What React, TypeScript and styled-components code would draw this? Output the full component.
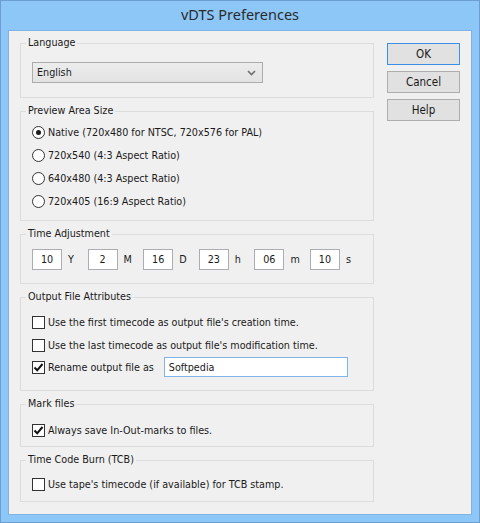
import React from "react";
import styled, { createGlobalStyle } from "styled-components";

const GlobalStyle = createGlobalStyle`
  html, body {
    margin: 0;
    padding: 0;
    background: #8cc7f7;
  }
  body {
    font-family: "DejaVu Sans Condensed", "DejaVu Sans", sans-serif;
    font-stretch: condensed;
    font-size: 10.7px;
    color: #1a1a1a;
  }
`;

const Window = styled.div`
  width: 480px;
  height: 523px;
  box-sizing: border-box;
  border: 1px solid #6d9ed1;
  background: #8cc7f7;
  display: flex;
  flex-direction: column;
`;

const TitleBar = styled.div`
  height: 29px;
  display: flex;
  align-items: center;
  justify-content: center;
  font-family: "Noto Sans", "Open Sans", sans-serif;
  font-stretch: normal;
  font-size: 14.5px;
  color: #2b2b2b;
  padding-bottom: 3px;
  box-sizing: border-box;
`;

const Client = styled.div`
  margin: 0 7px 7px;
  flex: 1;
  background: #f0f0f0;
  border: 1px solid #7fb3e4;
  display: flex;
  padding: 5px 0 0 11px;
  gap: 13px;
`;

const Column = styled.div`
  width: 354px;
  display: flex;
  flex-direction: column;
  gap: 6px;
`;

const Group = styled.fieldset<{ $h: number }>`
  margin: 0;
  padding: 0;
  box-sizing: border-box;
  height: ${(p) => p.$h}px;
  border: 1px solid #dcdcdc;
  min-width: 0;
`;

const Legend = styled.legend`
  margin-left: 5px;
  padding: 0 2px;
  line-height: 14px;
`;

const GroupBody = styled.div<{ $pt: number }>`
  padding: ${(p) => p.$pt}px 10px 0 11px;
  display: flex;
  flex-direction: column;
`;

const Select = styled.div`
  width: 231px;
  height: 21px;
  box-sizing: border-box;
  border: 1px solid #acacac;
  background: linear-gradient(#ececec, #e3e3e3);
  display: flex;
  align-items: center;
  justify-content: space-between;
  padding: 0 6px 0 4px;
`;

const Row = styled.label<{ $h?: number }>`
  height: ${(p) => p.$h ?? 23}px;
  display: flex;
  align-items: center;
  gap: 3px;
  white-space: nowrap;
`;

const RadioDot = styled.span<{ $on?: boolean }>`
  width: 13px;
  height: 13px;
  box-sizing: border-box;
  border-radius: 50%;
  border: 1px solid #333;
  background: #fff;
  display: flex;
  align-items: center;
  justify-content: center;
  &::after {
    content: "";
    width: 5px;
    height: 5px;
    border-radius: 50%;
    background: ${(p) => (p.$on ? "#1a1a1a" : "transparent")};
  }
`;

const Box = styled.span`
  width: 13px;
  height: 13px;
  box-sizing: border-box;
  border: 1px solid #333;
  background: #fff;
  display: flex;
  align-items: center;
  justify-content: center;
`;

const TimeRow = styled.div`
  display: grid;
  grid-template-columns: repeat(6, 55.6px);
`;

const TimeCell = styled.div`
  display: flex;
  align-items: center;
  gap: 6px;
`;

const Field = styled.div<{ $w: number; $h: number; $focus?: boolean; $center?: boolean }>`
  width: ${(p) => p.$w}px;
  height: ${(p) => p.$h}px;
  box-sizing: border-box;
  background: #fff;
  border: 1px solid ${(p) => (p.$focus ? "#7eb4ea" : "#abadb3")};
  display: flex;
  align-items: center;
  justify-content: ${(p) => (p.$center ? "center" : "flex-start")};
  padding: 0 4px;
  margin-left: ${(p) => (p.$focus ? 7 : 0)}px;
`;

const Buttons = styled.div`
  display: flex;
  flex-direction: column;
  gap: 6px;
  padding-top: 7px;
`;

const Button = styled.div<{ $default?: boolean }>`
  width: 73px;
  height: 22px;
  box-sizing: border-box;
  background: #e1e1e1;
  border: 1px solid ${(p) => (p.$default ? "#3c8fe6" : "#adadad")};
  display: flex;
  align-items: center;
  justify-content: center;
  font-size: 11.5px;
`;

const Chevron = () => (
  <svg width="9" height="6" viewBox="0 0 9 6">
    <path d="M1 1 L4.5 4.5 L8 1" fill="none" stroke="#6f6f6f" strokeWidth="1.6" />
  </svg>
);

const Tick = () => (
  <svg width="11" height="11" viewBox="0 0 11 11">
    <path d="M1.5 5.5 L4.2 8.3 L9.5 2" fill="none" stroke="#111" strokeWidth="2" />
  </svg>
);

const Radio: React.FC<{ on?: boolean; children: React.ReactNode }> = ({ on, children }) => (
  <Row>
    <RadioDot $on={on} />
    {children}
  </Row>
);

const Check: React.FC<{ on?: boolean; h?: number; children: React.ReactNode }> = ({ on, h, children }) => (
  <Row $h={h}>
    <Box>{on && <Tick />}</Box>
    {children}
  </Row>
);

const time = [
  ["10", "Y"],
  ["2", "M"],
  ["16", "D"],
  ["23", "h"],
  ["06", "m"],
  ["10", "s"],
];

export default function App() {
  return (
    <>
      <GlobalStyle />
      <Window>
        <TitleBar>vDTS Preferences</TitleBar>
        <Client>
          <Column>
            <Group $h={62}>
              <Legend>Language</Legend>
              <GroupBody $pt={12}>
                <Select>
                  English
                  <Chevron />
                </Select>
              </GroupBody>
            </Group>
            <Group $h={117}>
              <Legend>Preview Area Size</Legend>
              <GroupBody $pt={3}>
                <Radio on>Native (720x480 for NTSC, 720x576 for PAL)</Radio>
                <Radio>720x540 (4:3 Aspect Ratio)</Radio>
                <Radio>640x480 (4:3 Aspect Ratio)</Radio>
                <Radio>720x405 (16:9 Aspect Ratio)</Radio>
              </GroupBody>
            </Group>
            <Group $h={57}>
              <Legend>Time Adjustment</Legend>
              <GroupBody $pt={8}>
                <TimeRow>
                  {time.map(([v, u], i) => (
                    <TimeCell key={i}>
                      <Field $w={30} $h={21} $center>
                        {v}
                      </Field>
                      {u}
                    </TimeCell>
                  ))}
                </TimeRow>
              </GroupBody>
            </Group>
            <Group $h={101}>
              <Legend>Output File Attributes</Legend>
              <GroupBody $pt={6}>
                <Check h={24}>Use the first timecode as output file's creation time.</Check>
                <Check h={23}>Use the last timecode as output file's modification time.</Check>
                <Check on h={20}>
                  Rename output file as
                  <Field $w={184} $h={20} $focus>
                    Softpedia
                  </Field>
                </Check>
              </GroupBody>
            </Group>
            <Group $h={50}>
              <Legend>Mark files</Legend>
              <GroupBody $pt={8}>
                <Check on h={22}>Always save In-Out-marks to files.</Check>
              </GroupBody>
            </Group>
            <Group $h={49}>
              <Legend>Time Code Burn (TCB)</Legend>
              <GroupBody $pt={6}>
                <Check h={22}>Use tape's timecode (if available) for TCB stamp.</Check>
              </GroupBody>
            </Group>
          </Column>
          <Buttons>
            <Button $default>OK</Button>
            <Button>Cancel</Button>
            <Button>Help</Button>
          </Buttons>
        </Client>
      </Window>
    </>
  );
}
